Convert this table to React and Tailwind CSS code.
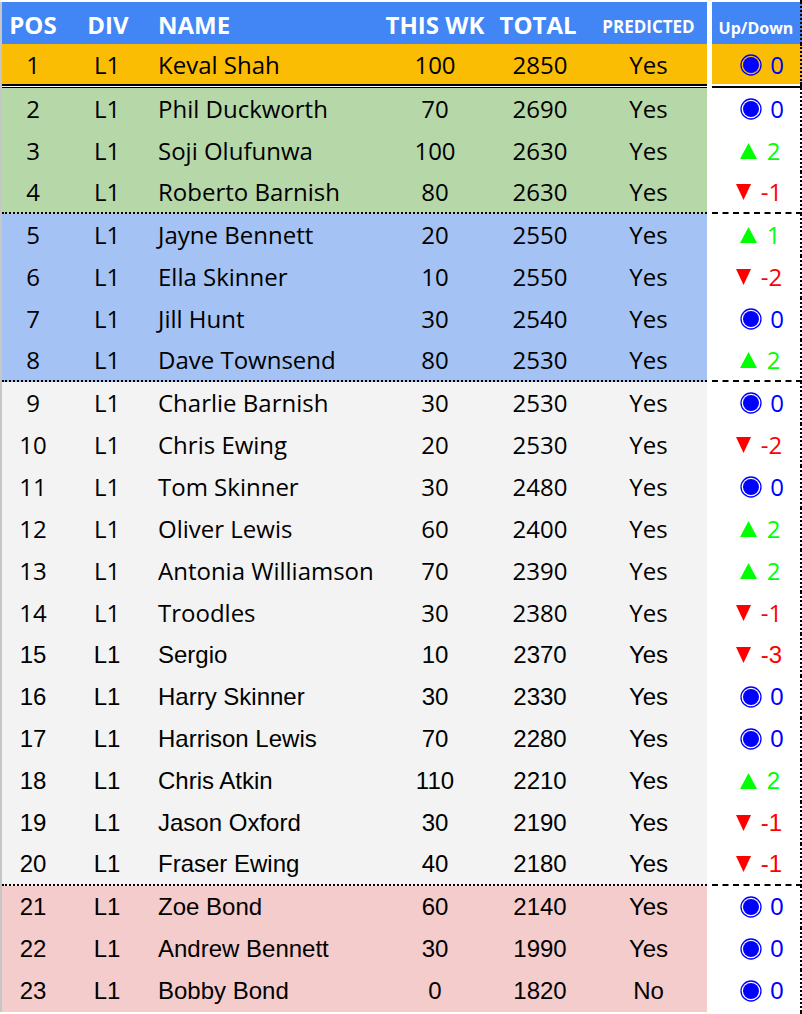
import React from "react";

const rows = [
  [1, "Keval Shah", 100, 2850, "Yes", 0],
  [2, "Phil Duckworth", 70, 2690, "Yes", 0],
  [3, "Soji Olufunwa", 100, 2630, "Yes", 2],
  [4, "Roberto Barnish", 80, 2630, "Yes", -1],
  [5, "Jayne Bennett", 20, 2550, "Yes", 1],
  [6, "Ella Skinner", 10, 2550, "Yes", -2],
  [7, "Jill Hunt", 30, 2540, "Yes", 0],
  [8, "Dave Townsend", 80, 2530, "Yes", 2],
  [9, "Charlie Barnish", 30, 2530, "Yes", 0],
  [10, "Chris Ewing", 20, 2530, "Yes", -2],
  [11, "Tom Skinner", 30, 2480, "Yes", 0],
  [12, "Oliver Lewis", 60, 2400, "Yes", 2],
  [13, "Antonia Williamson", 70, 2390, "Yes", 2],
  [14, "Troodles", 30, 2380, "Yes", -1],
  [15, "Sergio", 10, 2370, "Yes", -3],
  [16, "Harry Skinner", 30, 2330, "Yes", 0],
  [17, "Harrison Lewis", 70, 2280, "Yes", 0],
  [18, "Chris Atkin", 110, 2210, "Yes", 2],
  [19, "Jason Oxford", 30, 2190, "Yes", -1],
  [20, "Fraser Ewing", 40, 2180, "Yes", -1],
  [21, "Zoe Bond", 60, 2140, "Yes", 0],
  [22, "Andrew Bennett", 30, 1990, "Yes", 0],
  [23, "Bobby Bond", 0, 1820, "No", 0],
];

function bgFor(pos) {
  if (pos === 1) return "bg-[#fbbc04]";
  if (pos <= 4) return "bg-[#b6d7a8]";
  if (pos <= 8) return "bg-[#a4c2f4]";
  if (pos <= 20) return "bg-[#f3f3f3]";
  return "bg-[#f4cccc]";
}

function Change({ v }) {
  if (v === 0) {
    return (
      <span className="flex items-center text-[#0000ff] pl-[6px]">
        <svg width="22" height="22" viewBox="0 0 22 22" className="mr-[8px]">
          <circle cx="11" cy="11" r="10" fill="none" stroke="#0000ff" strokeWidth="1.3" />
          <circle cx="11" cy="11" r="8" fill="#0000ff" />
        </svg>
        <span>0</span>
      </span>
    );
  }
  if (v > 0) {
    return (
      <span className="flex items-center text-[#00ff00] pl-[2px]">
        <svg width="17" height="16" viewBox="0 0 17 16" className="mr-[10px]">
          <polygon points="8.5,0 17,16 0,16" fill="#00ff00" />
        </svg>
        <span>{v}</span>
      </span>
    );
  }
  return (
    <span className="flex items-center text-[#ff0000]">
      <svg width="15" height="16" viewBox="0 0 15 16" className="mr-[10px]">
        <polygon points="0,0 15,0 7.5,16" fill="#ff0000" />
      </svg>
      <span>{v}</span>
    </span>
  );
}

function Row({ r }) {
  const [pos, name, wk, total, pred, ch] = r;
  const open = pos <= 14;
  const font = open
    ? "font-['Open_Sans',sans-serif]"
    : "font-['Liberation_Sans',Arial,sans-serif]";
  const sep = pos === 4 || pos === 8 || pos === 20;
  const h = pos === 1 ? "h-[40px]" : "h-[42px]";
  return (
    <div className={`flex ${h} ${font} text-[24px] text-black`}>
      <div className="w-[2px] bg-[#c4c7c6]" />
      <div
        className={`flex w-[705px] items-center ${bgFor(pos)} ${
          sep ? "border-b-2 border-dotted border-black" : ""
        } ${pos === 1 ? "pt-[1px]" : ""}`}
      >
        <div className="w-[62px] text-center">{pos}</div>
        <div className="w-[86px] text-center">L1</div>
        <div className="w-[230px] pl-2 whitespace-nowrap">{name}</div>
        <div className="w-[110px] text-center">{wk}</div>
        <div className="w-[100px] text-center">{total}</div>
        <div className="w-[117px] text-center">{pred}</div>
      </div>
      <div className="w-[5px] bg-white" />
      <div
        className={`flex w-[90px] items-center justify-center border-r-2 border-dotted border-r-black pl-[6px] ${
          pos === 1 ? "bg-[#fbbc04] pt-[1px]" : "bg-white"
        } ${sep ? "border-b-2 border-b-black" : ""}`}
        style={sep ? { borderBottomStyle: "dashed" } : undefined}
      >
        <Change v={ch} />
      </div>
    </div>
  );
}

export default function App() {
  return (
    <div className="w-[802px] h-[1014px] bg-white overflow-hidden flex flex-col">
      <div className="flex h-[2px]">
        <div className="w-[712px]" />
        <div className="w-[90px] border-r-2 border-dotted border-black" />
      </div>
      {/* header */}
      <div className="flex h-[42px] font-['Open_Sans',sans-serif] font-bold text-white">
        <div className="w-[2px] bg-[#c4c7c6]" />
        <div className="flex w-[705px] items-center bg-[#4285f4] text-[24px] pt-[3px]">
          <div className="w-[62px] text-center">POS</div>
          <div className="w-[86px] text-center pl-[2px]">DIV</div>
          <div className="w-[230px] pl-2">NAME</div>
          <div className="w-[110px] text-center whitespace-nowrap">THIS WK</div>
          <div className="w-[100px] text-center pr-1">TOTAL</div>
          <div className="w-[117px] text-center text-[17px] pt-[5px]">PREDICTED</div>
        </div>
        <div className="w-[5px] bg-white" />
        <div className="flex w-[90px] items-center justify-center border-r-2 border-dotted border-black bg-[#4285f4] text-[16px] pt-[9px]">
          Up/Down
        </div>
      </div>
      <Row r={rows[0]} />
      {/* double divider */}
      <div className="flex h-[4px]">
        <div className="w-[2px] bg-[#c4c7c6]" />
        <div className="w-[705px] flex flex-col">
          <div className="h-[2px] bg-black" />
          <div className="h-[1px] bg-white" />
          <div className="h-[1px] bg-black" />
        </div>
        <div className="w-[5px] bg-white" />
        <div className="w-[90px] flex flex-col border-r-2 border-dotted border-black">
          <div className="h-[2px] bg-white" />
          <div className="h-[2px] bg-black" />
        </div>
      </div>
      {rows.slice(1).map((r) => (
        <Row key={r[0]} r={r} />
      ))}
      <div className="flex flex-1">
        <div className="w-[712px]" />
        <div className="w-[90px] border-r-2 border-dotted border-black" />
      </div>
    </div>
  );
}
